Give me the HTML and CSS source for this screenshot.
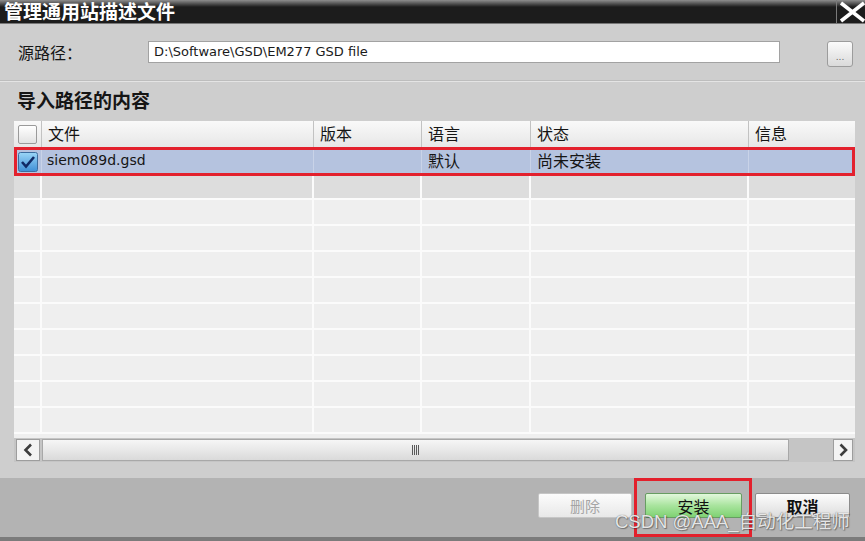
FILE: index.html
```html
<!DOCTYPE html>
<html lang="zh-CN">

<head>
    <meta charset="UTF-8">
    <meta name="viewport" content="width=device-width, initial-scale=1.0">
    <link rel="stylesheet" href="styles.css">
    <title>管理通用站描述文件</title>
</head>

<body>
    <div class="dialog">

        <div class="titlebar">
            <span class="title">管理通用站描述文件</span>
            <span class="close">
                <svg width="29" height="23" viewBox="0 0 29 23">
                    <path d="M4 3 L27 21 M27 3 L4 21" stroke="#fff" stroke-width="3.6" fill="none" />
                </svg>
            </span>
        </div>

        <div class="source">
            <span class="label">源路径：</span>
            <div class="path">D:\Software\GSD\EM277 GSD file</div>
            <button class="browse" type="button">...</button>
        </div>

        <div class="divider"></div>

        <div class="section-title">导入路径的内容</div>

        <div class="grid">
            <div class="row head">
                <div class="cell chk"><span class="box"></span></div>
                <div class="cell">文件</div>
                <div class="cell">版本</div>
                <div class="cell">语言</div>
                <div class="cell">状态</div>
                <div class="cell">信息</div>
            </div>

            <div class="body">
                <div class="row sel">
                    <div class="cell chk">
                        <svg width="20" height="20" viewBox="0 0 20 20">
                            <defs>
                                <linearGradient id="cb" x1="0" y1="0" x2="0" y2="1">
                                    <stop offset="0" stop-color="#9ad6f7" />
                                    <stop offset="1" stop-color="#3f8fd6" />
                                </linearGradient>
                            </defs>
                            <rect x="0.5" y="0.5" width="19" height="19" rx="2" fill="url(#cb)" stroke="#3d6c9e" />
                            <path d="M4 10 L8 14.5 L16 5" fill="none" stroke="#102a66" stroke-width="2.6" />
                        </svg>
                    </div>
                    <div class="cell latin">siem089d.gsd</div>
                    <div class="cell"></div>
                    <div class="cell">默认</div>
                    <div class="cell">尚未安装</div>
                    <div class="cell"></div>
                </div>
                <div class="row hover">
                    <div class="cell"></div><div class="cell"></div><div class="cell"></div>
                    <div class="cell"></div><div class="cell"></div><div class="cell"></div>
                </div>
                <div class="row">
                    <div class="cell"></div><div class="cell"></div><div class="cell"></div>
                    <div class="cell"></div><div class="cell"></div><div class="cell"></div>
                </div>
                <div class="row">
                    <div class="cell"></div><div class="cell"></div><div class="cell"></div>
                    <div class="cell"></div><div class="cell"></div><div class="cell"></div>
                </div>
                <div class="row">
                    <div class="cell"></div><div class="cell"></div><div class="cell"></div>
                    <div class="cell"></div><div class="cell"></div><div class="cell"></div>
                </div>
                <div class="row">
                    <div class="cell"></div><div class="cell"></div><div class="cell"></div>
                    <div class="cell"></div><div class="cell"></div><div class="cell"></div>
                </div>
                <div class="row">
                    <div class="cell"></div><div class="cell"></div><div class="cell"></div>
                    <div class="cell"></div><div class="cell"></div><div class="cell"></div>
                </div>
                <div class="row">
                    <div class="cell"></div><div class="cell"></div><div class="cell"></div>
                    <div class="cell"></div><div class="cell"></div><div class="cell"></div>
                </div>
                <div class="row">
                    <div class="cell"></div><div class="cell"></div><div class="cell"></div>
                    <div class="cell"></div><div class="cell"></div><div class="cell"></div>
                </div>
                <div class="row">
                    <div class="cell"></div><div class="cell"></div><div class="cell"></div>
                    <div class="cell"></div><div class="cell"></div><div class="cell"></div>
                </div>
                <div class="row">
                    <div class="cell"></div><div class="cell"></div><div class="cell"></div>
                    <div class="cell"></div><div class="cell"></div><div class="cell"></div>
                </div>
            </div>

            <div class="hscroll">
                <span class="sbtn">
                    <svg width="22" height="20" viewBox="0 0 22 20">
                        <path d="M14 4.5 L8.5 10 L14 15.5" fill="none" stroke="#3c3c3c" stroke-width="2.6" />
                    </svg>
                </span>
                <span class="thumb"><span class="grip"></span></span>
                <span class="track"></span>
                <span class="sbtn right">
                    <svg width="18" height="20" viewBox="0 0 18 20">
                        <path d="M6.5 4.5 L12 10 L6.5 15.5" fill="none" stroke="#3c3c3c" stroke-width="2.6" />
                    </svg>
                </span>
            </div>
        </div>

        <div class="spacer"></div>

        <div class="footer">
            <button class="btn disabled" type="button">删除</button>
            <div class="mark">
                <button class="btn install" type="button">安装</button>
            </div>
            <button class="btn cancel" type="button">取消</button>
        </div>

        <div class="watermark">CSDN @AAA_自动化工程师</div>

    </div>
</body>

</html>
```

FILE: styles.css
```css
html {
    box-sizing: border-box;
}

*,
*::before,
*::after {
    margin: 0;
    padding: 0;
    box-sizing: inherit;
}

body {
    background-color: #cecece;
    font-family: "DejaVu Sans", "Noto Sans CJK SC", sans-serif;
    color: #151515;
}

.dialog {
    position: relative;
    width: 865px;
    height: 541px;
    display: flex;
    flex-direction: column;
    overflow: hidden;
    background-color: #cecece;
}

/* title bar */
.titlebar {
    height: 24px;
    display: flex;
    justify-content: space-between;
    background: linear-gradient(#8e8e8e 0, #3c3c3c 5px, #1c1c1c 7px, #1c1c1c 100%);
    border-bottom: 1px solid #777;
    overflow: hidden;
}

.title {
    color: #fff;
    font-family: "Noto Sans CJK SC", sans-serif;
    font-weight: bold;
    font-size: 19px;
    line-height: 21px;
    padding-left: 4px;
}

.close {
    width: 29px;
    border-left: 1px solid #7a7a7a;
}

.close svg {
    display: block;
}

/* source path */
.source {
    height: 56px;
    display: flex;
    align-items: flex-start;
    padding-top: 17px;
}

.label {
    width: 148px;
    padding-left: 18px;
    font-family: "Noto Sans CJK SC", sans-serif;
    font-size: 16px;
    line-height: 22px;
}

.path {
    width: 632px;
    height: 22px;
    background-color: #fff;
    border: 1px solid #a2a2a2;
    font-size: 13px;
    line-height: 20px;
    padding-left: 5px;
    color: #1a1a1a;
}

.browse {
    margin-left: 47px;
    width: 26px;
    height: 26px;
    border: 1px solid #9c9c9c;
    border-radius: 3px;
    background: linear-gradient(#fbfbfb, #dadada);
    font-family: "DejaVu Sans", sans-serif;
    font-size: 9px;
    line-height: 30px;
    color: #666;
}

.divider {
    height: 2px;
    border-top: 1px solid #bdbdbd;
    border-bottom: 1px solid #e4e4e4;
}

.section-title {
    height: 39px;
    padding-left: 17px;
    padding-top: 6px;
    font-family: "Noto Sans CJK SC", sans-serif;
    font-weight: bold;
    font-size: 19px;
    line-height: 24px;
}

/* file grid */
.grid {
    margin-left: 14px;
    width: 841px;
    display: flex;
    flex-direction: column;
}

.row {
    display: grid;
    grid-template-columns: 28px 272px 108px 109px 218px 106px;
}

.cell {
    padding-left: 6px;
    font-family: "Noto Sans CJK SC", sans-serif;
    font-size: 16px;
    white-space: nowrap;
    overflow: hidden;
}

.chk {
    padding-left: 0;
    display: flex;
    align-items: center;
    justify-content: center;
}

.head {
    height: 26px;
    background: linear-gradient(#f9f9f9, #e7e7e7);
}

.head .cell {
    line-height: 24px;
    border-right: 1px solid #c2c2c2;
}

.head .cell:last-child {
    border-right: none;
}

.box {
    width: 19px;
    height: 19px;
    border: 1px solid #9a9a9a;
    border-radius: 2px;
    background: linear-gradient(#ffffff, #e2e2e2);
}

.body {
    height: 291px;
    overflow: hidden;
    background-color: #efefef;
}

.body .row {
    height: 26px;
    border-bottom: 2px solid #fbfbfb;
}

.body .cell {
    border-right: 2px solid #fbfbfb;
}

.body .row .cell:last-child {
    border-right: none;
}

.body .sel {
    height: 29px;
    border-bottom: none;
    background-color: #b5c3df;
    outline: 3px solid #e3212d;
    outline-offset: -3px;
}

.body .sel .cell {
    line-height: 27px;
    border-right: 1px solid #c9d3e8;
}

.body .sel .latin {
    font-family: "DejaVu Sans", sans-serif;
    font-size: 14px;
    padding-left: 5px;
}

.body .hover {
    height: 24px;
    background-color: #dddddd;
}

/* horizontal scroll bar */
.hscroll {
    height: 24px;
    display: flex;
    gap: 2px;
    padding: 1px 2px;
    background-color: #c5c5c5;
}

.sbtn {
    width: 24px;
    border: 1px solid #9d9d9d;
    background-color: #f3f3f3;
    display: flex;
    align-items: center;
    justify-content: center;
}

.sbtn.right {
    width: 20px;
}

.thumb {
    width: 747px;
    border: 1px solid #a8a8a8;
    background: linear-gradient(#f6f6f6, #dadada);
    display: flex;
    align-items: center;
    justify-content: center;
}

.grip {
    width: 7px;
    height: 10px;
    background: repeating-linear-gradient(90deg, #5a5a5a 0, #5a5a5a 1px, transparent 1px, transparent 2px);
}

.track {
    flex: 1;
}

.spacer {
    height: 16px;
}

/* footer buttons */
.footer {
    height: 63px;
    display: flex;
    justify-content: flex-end;
    padding-right: 15px;
    background-color: #b3b3b3;
    border-bottom: 4px solid #7b7b7b;
}

.btn {
    margin-top: 15px;
    height: 25px;
    font-family: "Noto Sans CJK SC", sans-serif;
    font-size: 15px;
    line-height: 22px;
    border-radius: 2px;
}

.disabled {
    width: 94px;
    border: 1px solid #c6c6c6;
    background: linear-gradient(#fcfcfc, #e8e8e8);
    color: #a5a5a5;
}

.mark {
    margin-left: 2px;
    border: 3px solid #e3202c;
    padding: 12px 7px 0 8px;
}

.mark .btn {
    margin-top: 0;
}

.install {
    width: 97px;
    border: 1px solid #679d62;
    background: linear-gradient(#e2f8dc, #a9e49e 50%, #7fd273);
    color: #111;
    font-size: 16px;
}

.cancel {
    margin-left: 3px;
    width: 95px;
    border: 1px solid #8c8c8c;
    background: linear-gradient(#fdfdfd, #dcdcdc);
    color: #111;
    font-size: 16px;
    font-weight: bold;
}

.watermark {
    position: absolute;
    left: 615px;
    top: 512px;
    font-family: "Liberation Sans", "Noto Sans CJK SC", sans-serif;
    font-size: 18.5px;
    line-height: 20px;
    color: rgba(255, 255, 255, 0.85);
    text-shadow: 0 0 1px #555, 1px 1px 1px rgba(0, 0, 0, 0.35);
    white-space: nowrap;
}
```
